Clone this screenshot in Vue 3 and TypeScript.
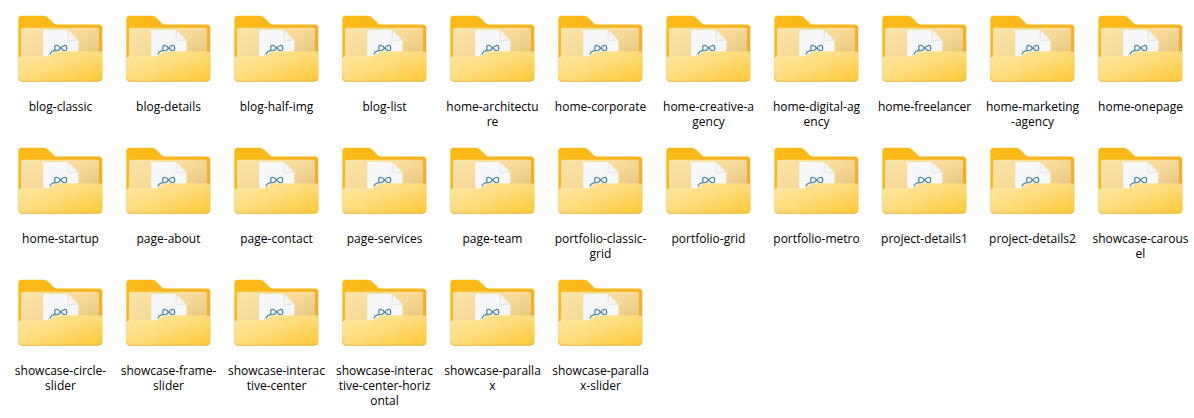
<script setup lang="ts">
interface Folder {
  lines: string[]
}

const names: string[] = [
  'blog-classic',
  'blog-details',
  'blog-half-img',
  'blog-list',
  'home-architectu|re',
  'home-corporate',
  'home-creative-a|gency',
  'home-digital-ag|ency',
  'home-freelancer',
  'home-marketing|-agency',
  'home-onepage',
  'home-startup',
  'page-about',
  'page-contact',
  'page-services',
  'page-team',
  'portfolio-classic-|grid',
  'portfolio-grid',
  'portfolio-metro',
  'project-details1',
  'project-details2',
  'showcase-carous|el',
  'showcase-circle-|slider',
  'showcase-frame-|slider',
  'showcase-interac|tive-center',
  'showcase-interac|tive-center-horiz|ontal',
  'showcase-paralla|x',
  'showcase-paralla|x-slider',
]

// A bar marks where a long name wraps onto the next line.
const folders: Folder[] = names.map((name) => ({ lines: name.split('|') }))
</script>

<template>
  <main class="explorer">
    <svg class="defs" width="0" height="0" aria-hidden="true">
      <defs>
        <linearGradient id="back" x1="0" y1="0" x2="1" y2="1">
          <stop offset="0" stop-color="#fdbc14" />
          <stop offset="0.5" stop-color="#f6b420" />
          <stop offset="1" stop-color="#e6a62c" />
        </linearGradient>
        <linearGradient id="inner" x1="0" y1="0" x2="1" y2="1">
          <stop offset="0" stop-color="#fbe3a8" />
          <stop offset="0.5" stop-color="#f6d995" />
          <stop offset="1" stop-color="#deb973" />
        </linearGradient>
        <linearGradient id="front" x1="0" y1="0" x2="1" y2="1">
          <stop offset="0" stop-color="#ffe9a8" />
          <stop offset="0.5" stop-color="#ffdb7a" />
          <stop offset="1" stop-color="#ffc836" />
        </linearGradient>
        <linearGradient id="fold" x1="0" y1="1" x2="1" y2="0">
          <stop offset="0" stop-color="#ffffff" />
          <stop offset="1" stop-color="#e2e2e2" />
        </linearGradient>
        <symbol id="folder" viewBox="0 0 100 80">
          <path fill="url(#back)" d="M8.3 11.3Q8.3 7.8 11.8 7.8H34Q36.3 7.8 38 9.5L43.6 15Q45.2 16.6 47.5 16.6H88.8Q92.3 16.6 92.3 20.2V69Q92.3 73 89 73H11.5Q8.3 73 8.3 69Z" />
          <path fill="url(#inner)" d="M11 22Q11 19.8 13 19.8H87Q89 19.8 89 22V60H11Z" />
          <path fill="#f7f8f9" d="M33.2 22H58.2L68.4 32.3V58H33.2Z" />
          <path fill="url(#fold)" d="M58.2 22V32.3H68.4Z" />
          <path fill="none" stroke="#d6d8d9" stroke-width=".7" d="M58.2 22V32.3H68.4" />
          <g fill="none" stroke="#4c88a6" stroke-width="1.3">
            <path d="M50.7 40C49.3 38.2 47.8 37.3 46.3 37.3Q44.8 37.3 44.8 38.9V41.3Q44.8 42.8 46.4 42.8C48.2 42.8 49.6 41.4 50.7 40C51.8 38.4 53.4 37.3 55 37.3Q56.6 37.3 56.6 38.9V41.3Q56.6 42.8 55 42.8C53.3 42.8 51.9 41.4 50.7 40Z" />
            <path d="M46 42.7Q41.5 42.4 39.8 46.5" />
          </g>
          <path fill="url(#front)" d="M8.3 51.5Q8.3 48.2 11.6 48.2H37.5Q39.3 48.2 40.8 47L44 44.4Q45.5 43.2 47.8 43.2H89.1Q92.3 43.2 92.3 46.5V69.4Q92.3 73 88.8 73H11.8Q8.3 73 8.3 69.4Z" />
          <path fill="none" stroke="#e5ac2d" stroke-width=".9" d="M8.9 70.8Q9.5 73.3 12 73.3H88.5Q91.1 73.3 91.7 70.8" />
        </symbol>
      </defs>
    </svg>
    <ul class="grid">
      <li v-for="folder in folders" :key="folder.lines.join('')" class="cell">
        <button type="button" class="item">
          <svg class="icon" aria-hidden="true"><use href="#folder" /></svg>
          <span class="label">
            <span v-for="line in folder.lines" :key="line" class="line">{{ line }}</span>
          </span>
        </button>
      </li>
    </ul>
  </main>
</template>

<style>
body {
  margin: 0;
  background: #ffffff;
}
</style>

<style scoped>
.explorer {
  padding: 8px 0 0 6px;
}

.defs {
  display: block;
}

.grid {
  display: grid;
  grid-template-columns: repeat(auto-fill, 108px);
  grid-auto-rows: minmax(132px, auto);
  margin: 0;
  padding: 0;
  list-style: none;
}

.item {
  display: flex;
  flex-direction: column;
  align-items: center;
  gap: 11px;
  width: 108px;
  margin: 0;
  padding: 0;
  border: 0;
  background: transparent;
  color: #000000;
  font-family: "Open Sans", "Segoe UI", "Noto Sans", sans-serif;
  font-size: 12px;
  line-height: 15px;
  text-align: center;
}

.icon {
  display: block;
  width: 100px;
  height: 80px;
}

.label {
  display: block;
  padding-left: 1px;
}

.line {
  display: block;
  white-space: nowrap;
}
</style>
